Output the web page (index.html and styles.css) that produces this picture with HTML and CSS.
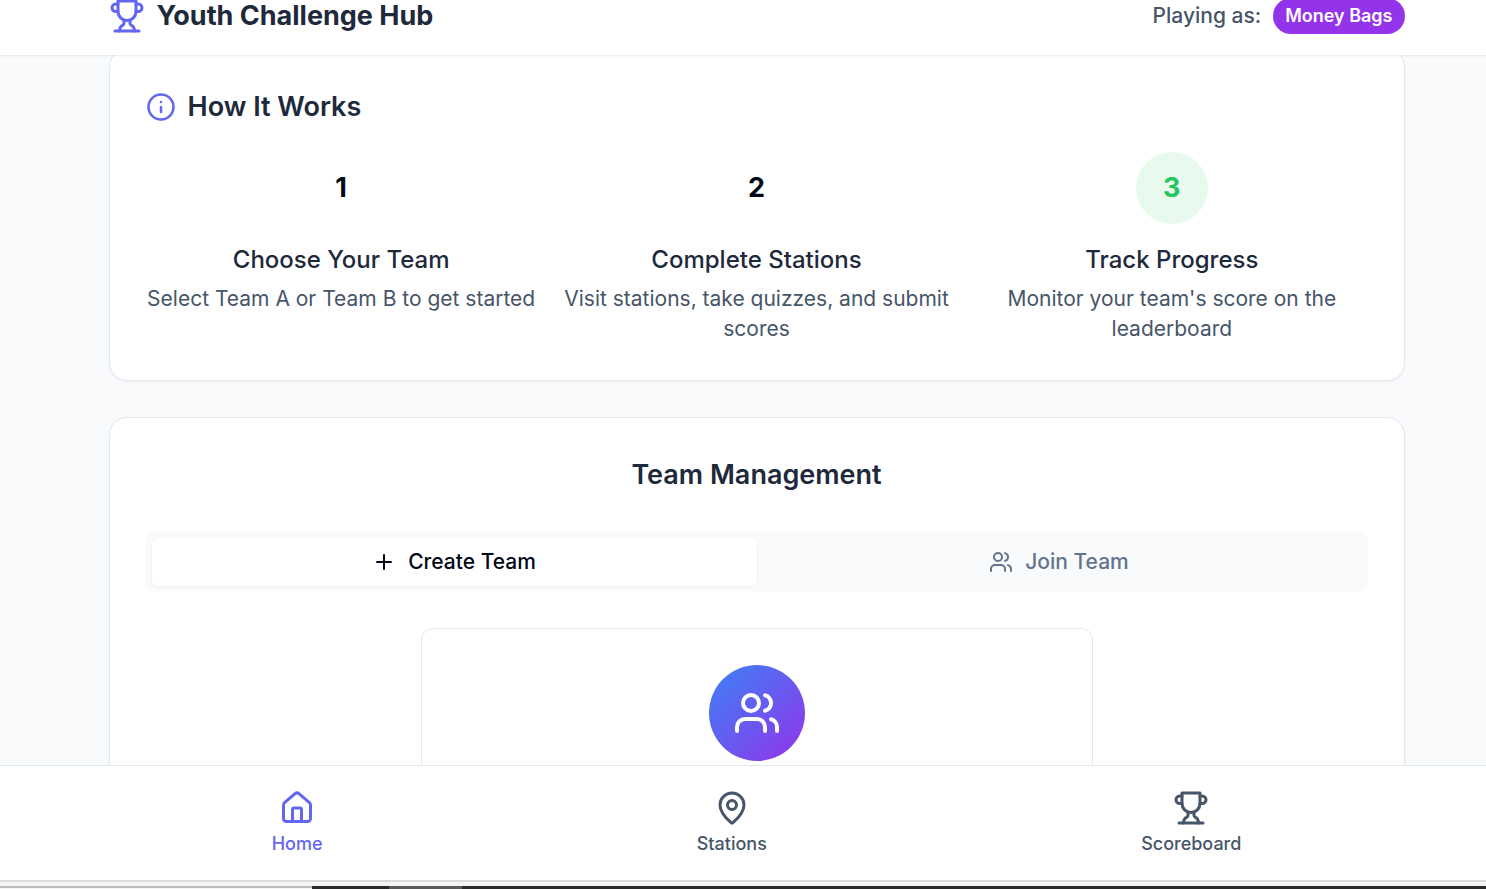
FILE: index.html
```html
<!DOCTYPE html>
<html lang="en">
<head>
    <meta charset="UTF-8">
    <meta name="viewport" content="width=device-width, initial-scale=1.0">
    <title>Youth Challenge Hub</title>
    <link rel="stylesheet" href="styles.css">
</head>
<body>
    <header class="header">
        <div class="container header-row">
            <div class="brand">
                <svg class="icon icon-lg" viewBox="0 0 24 24"><path d="M6 9H4.5a2.5 2.5 0 0 1 0-5H6"/><path d="M18 9h1.5a2.5 2.5 0 0 0 0-5H18"/><path d="M4 22h16"/><path d="M10 14.66V17c0 .55-.47.98-.97 1.21C7.85 18.75 7 20.24 7 22"/><path d="M14 14.66V17c0 .55.47.98.97 1.21C16.15 18.75 17 20.24 17 22"/><path d="M18 2H6v7a6 6 0 0 0 12 0V2Z"/></svg>
                <h1>Youth Challenge Hub</h1>
            </div>
            <div class="player">
                <span>Playing as:</span>
                <span class="badge">Money Bags</span>
            </div>
        </div>
    </header>

    <main class="main">
        <div class="container">
            <section class="card">
                <h2 class="how-title">
                    <svg class="icon icon-md" viewBox="0 0 24 24"><circle cx="12" cy="12" r="10"/><path d="M12 16v-4"/><path d="M12 8h.01"/></svg>
                    How It Works
                </h2>
                <div class="steps">
                    <div class="step">
                        <div class="step-number">1</div>
                        <h3>Choose Your Team</h3>
                        <p>Select Team A or Team B to get started</p>
                    </div>
                    <div class="step">
                        <div class="step-number">2</div>
                        <h3>Complete Stations</h3>
                        <p>Visit stations, take quizzes, and submit scores</p>
                    </div>
                    <div class="step">
                        <div class="step-number green">3</div>
                        <h3>Track Progress</h3>
                        <p>Monitor your team's score on the leaderboard</p>
                    </div>
                </div>
            </section>

            <section class="card">
                <h2 class="team-title">Team Management</h2>
                <div class="tabs" role="tablist">
                    <button class="tab active" role="tab" aria-selected="true">
                        <svg class="icon icon-sm" viewBox="0 0 24 24"><path d="M5 12h14"/><path d="M12 5v14"/></svg>
                        Create Team
                    </button>
                    <button class="tab" role="tab" aria-selected="false">
                        <svg class="icon icon-sm" viewBox="0 0 24 24"><path d="M16 21v-2a4 4 0 0 0-4-4H6a4 4 0 0 0-4 4v2"/><circle cx="9" cy="7" r="4"/><path d="M22 21v-2a4 4 0 0 0-3-3.87"/><path d="M16 3.13a4 4 0 0 1 0 7.75"/></svg>
                        Join Team
                    </button>
                </div>
                <div class="create-card">
                    <div class="avatar">
                        <svg class="icon icon-xl" viewBox="0 0 24 24"><path d="M16 21v-2a4 4 0 0 0-4-4H6a4 4 0 0 0-4 4v2"/><circle cx="9" cy="7" r="4"/><path d="M22 21v-2a4 4 0 0 0-3-3.87"/><path d="M16 3.13a4 4 0 0 1 0 7.75"/></svg>
                    </div>
                </div>
            </section>
        </div>
    </main>

    <nav class="bottom-nav">
        <div class="nav-row">
            <a href="#home" class="nav-item active">
                <svg class="icon icon-lg" viewBox="0 0 24 24"><path d="M15 21v-8a1 1 0 0 0-1-1h-4a1 1 0 0 0-1 1v8"/><path d="M3 10a2 2 0 0 1 .709-1.528l7-5.999a2 2 0 0 1 2.582 0l7 5.999A2 2 0 0 1 21 10v9a2 2 0 0 1-2 2H5a2 2 0 0 1-2-2z"/></svg>
                Home
            </a>
            <a href="#stations" class="nav-item">
                <svg class="icon icon-lg" viewBox="0 0 24 24"><path d="M20 10c0 4.993-5.539 10.193-7.399 11.799a1 1 0 0 1-1.202 0C9.539 20.193 4 14.993 4 10a8 8 0 0 1 16 0"/><circle cx="12" cy="10" r="3"/></svg>
                Stations
            </a>
            <a href="#scoreboard" class="nav-item">
                <svg class="icon icon-lg" viewBox="0 0 24 24"><path d="M6 9H4.5a2.5 2.5 0 0 1 0-5H6"/><path d="M18 9h1.5a2.5 2.5 0 0 0 0-5H18"/><path d="M4 22h16"/><path d="M10 14.66V17c0 .55-.47.98-.97 1.21C7.85 18.75 7 20.24 7 22"/><path d="M14 14.66V17c0 .55.47.98.97 1.21C16.15 18.75 17 20.24 17 22"/><path d="M18 2H6v7a6 6 0 0 0 12 0V2Z"/></svg>
                Scoreboard
            </a>
        </div>
    </nav>
    <div class="window-edge">
        <div class="edge-light"></div>
        <div class="edge-dark"></div>
        <div class="edge-grey"></div>
        <div class="edge-dark edge-rest"></div>
    </div>
</body>
</html>
```

FILE: styles.css
```css
* {
    box-sizing: border-box;
    margin: 0;
    padding: 0;
}

body {
    font-family: Inter, sans-serif;
    background-color: #f8fafc;
    color: #020817;
    height: 100vh;
    display: flex;
    flex-direction: column;
    overflow: hidden;
}

.icon {
    fill: none;
    stroke: currentColor;
    stroke-width: 2;
    stroke-linecap: round;
    stroke-linejoin: round;
    flex-shrink: 0;
}

.icon-sm {
    width: 24px;
    height: 24px;
}

.icon-md {
    width: 30px;
    height: 30px;
}

.icon-lg {
    width: 36px;
    height: 36px;
}

.icon-xl {
    width: 48px;
    height: 48px;
}

.header,
.main,
.bottom-nav {
    padding-left: 27px;
}

.container {
    max-width: 1344px;
    margin: 0 auto;
    padding: 0 24px;
}

/* Header */
.header {
    background-color: #fff;
    padding-bottom: 23px;
    box-shadow: 0 1px 2px rgba(0, 0, 0, 0.08);
    z-index: 1;
}

.header-row {
    display: flex;
    justify-content: space-between;
    align-items: center;
    height: 32px;
}

.brand,
.player {
    display: flex;
    align-items: center;
    gap: 12px;
}

.brand .icon,
.how-title .icon {
    color: #6366f1;
}

h1 {
    font-size: 27px;
    font-weight: 700;
    line-height: 32px;
    color: #1e293b;
}

.player {
    font-size: 21px;
    font-weight: 500;
    line-height: 30px;
    color: #475569;
}

.badge {
    background-color: #9333ea;
    color: #fff;
    font-size: 18px;
    font-weight: 600;
    line-height: 24px;
    padding: 6px 12px;
    border-radius: 18px;
}

/* Cards */
.main {
    flex: 1;
    min-height: 0;
    overflow: hidden;
}

.main .container {
    margin-top: -6px;
}

.card {
    background-color: #fff;
    border: 1px solid #e2e8f0;
    border-radius: 18px;
    padding: 36px;
    margin-bottom: 36px;
    box-shadow: 0 1px 3px rgba(0, 0, 0, 0.05);
}

h2 {
    font-size: 27px;
    font-weight: 600;
    line-height: 42px;
    color: #1e293b;
}

.how-title {
    display: flex;
    align-items: center;
    gap: 12px;
    margin-bottom: 24px;
}

.steps {
    display: grid;
    grid-template-columns: repeat(3, 1fr);
    gap: 24px;
}

.step {
    text-align: center;
}

.step-number {
    width: 72px;
    height: 72px;
    margin: 0 auto 18px;
    border-radius: 50%;
    display: flex;
    align-items: center;
    justify-content: center;
    font-size: 27px;
    font-weight: 700;
    line-height: 42px;
}

.step-number.green {
    background-color: #e8f9ee;
    color: #22c55e;
}

h3 {
    font-size: 24px;
    font-weight: 500;
    line-height: 36px;
    margin-bottom: 6px;
    color: #1e293b;
}

.step p {
    font-size: 21px;
    line-height: 30px;
    color: #475569;
}

/* Team management */
.team-title {
    text-align: center;
    margin-bottom: 36px;
}

.tabs {
    display: grid;
    grid-template-columns: 1fr 1fr;
    background-color: #f8fafc;
    border-radius: 9px;
    padding: 6px;
    margin-bottom: 36px;
}

.tab {
    display: flex;
    align-items: center;
    justify-content: center;
    gap: 12px;
    border: none;
    border-radius: 6px;
    background: none;
    color: #64748b;
    font-family: inherit;
    font-size: 21px;
    font-weight: 500;
    line-height: 30px;
    padding: 9px 18px;
    cursor: pointer;
}

.tab.active {
    background-color: #fff;
    color: #020817;
    box-shadow: 0 1px 3px rgba(0, 0, 0, 0.06);
}

.create-card {
    max-width: 672px;
    margin: 0 auto;
    border: 1px solid #e2e8f0;
    border-radius: 12px;
    padding: 36px;
}

.avatar {
    width: 96px;
    height: 96px;
    margin: 0 auto;
    border-radius: 50%;
    background: linear-gradient(to bottom right, #3b82f6, #9333ea);
    color: #fff;
    display: flex;
    align-items: center;
    justify-content: center;
}

/* Bottom navigation */
.bottom-nav {
    background-color: #fff;
    border-top: 1px solid #e2e8f0;
    z-index: 1;
}

.nav-row {
    max-width: 1344px;
    margin: 0 auto;
    display: flex;
    justify-content: space-around;
    padding: 12px 0;
}

.nav-item {
    display: flex;
    flex-direction: column;
    align-items: center;
    gap: 6px;
    padding: 12px 18px;
    font-size: 18px;
    font-weight: 500;
    line-height: 24px;
    color: #475569;
    text-decoration: none;
}

.nav-item.active {
    color: #6366f1;
}

.window-edge {
    display: flex;
    align-items: flex-end;
    height: 9px;
    background-color: #f5f5f5;
    border-top: 2px solid #dcdcdc;
}

.edge-light {
    width: 21%;
    height: 3px;
    background-color: #f5f5f5;
    border-top: 2px solid #bdbdbd;
}

.edge-dark {
    width: 77px;
    height: 3px;
    background-color: #2b2a2d;
}

.edge-grey {
    width: 73px;
    height: 3px;
    background-color: #59585b;
}

.edge-rest {
    flex: 1;
}
```
